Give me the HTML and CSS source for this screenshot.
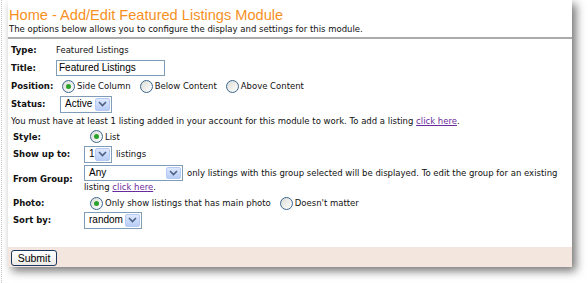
FILE: index.html
```html
<!DOCTYPE html>
<html lang="en">
<head>
    <meta charset="UTF-8">
    <title>Add/Edit Featured Listings Module</title>
    <link rel="stylesheet" href="styles.css">
</head>
<body>
    <div class="page">
        <div class="panel">
            <div class="head">
                <h1>Home - Add/Edit Featured Listings Module</h1>
                <p class="intro">The options below allows you to configure the display and settings for this module.</p>
            </div>

            <div class="form-top">
                <span class="lbl">Type:</span>
                <span class="val">Featured Listings</span>

                <span class="lbl">Title:</span>
                <span class="val"><span class="textbox">Featured Listings</span></span>

                <span class="lbl">Position:</span>
                <span class="val radios">
                    <span class="radio checked"></span><span class="opt">Side Column</span>
                    <span class="radio"></span><span class="opt">Below Content</span>
                    <span class="radio"></span><span class="opt">Above Content</span>
                </span>

                <span class="lbl">Status:</span>
                <span class="val"><span class="select status-sel"><span class="sel-text">Active</span><span class="arrow"><svg width="9" height="6" viewBox="0 0 9 6"><path d="M1 1 L4.5 4.5 L8 1" fill="none" stroke="#4d6185" stroke-width="1.6"/></svg></span></span></span>
            </div>

            <p class="notice">You must have at least 1 listing added in your account for this module to work. To add a listing <a href="#">click here</a>.</p>

            <div class="form-sub">
                <span class="lbl">Style:</span>
                <span class="val radios"><span class="radio checked"></span><span class="opt">List</span></span>

                <span class="lbl">Show up to:</span>
                <span class="val"><span class="select count-sel"><span class="sel-text">1</span><span class="arrow"><svg width="9" height="6" viewBox="0 0 9 6"><path d="M1 1 L4.5 4.5 L8 1" fill="none" stroke="#4d6185" stroke-width="1.6"/></svg></span></span> <span class="after">listings</span></span>

                <span class="lbl">From Group:</span>
                <div class="group-val">
                    <div class="group-line">
                        <span class="select group-sel"><span class="sel-text">Any</span><span class="arrow"><svg width="9" height="6" viewBox="0 0 9 6"><path d="M1 1 L4.5 4.5 L8 1" fill="none" stroke="#4d6185" stroke-width="1.6"/></svg></span></span>
                        <span>only listings with this group selected will be displayed. To edit the group for an existing</span>
                    </div>
                    <div class="group-line2"><span>listing</span> <a href="#">click here</a><span>.</span></div>
                </div>

                <span class="lbl">Photo:</span>
                <span class="val radios">
                    <span class="radio checked"></span><span class="opt">Only show listings that has main photo</span>
                    <span class="radio"></span><span class="opt">Doesn't matter</span>
                </span>

                <span class="lbl">Sort by:</span>
                <span class="val"><span class="select sort-sel"><span class="sel-text">random</span><span class="arrow"><svg width="9" height="6" viewBox="0 0 9 6"><path d="M1 1 L4.5 4.5 L8 1" fill="none" stroke="#4d6185" stroke-width="1.6"/></svg></span></span></span>
            </div>

            <div class="foot">
                <button type="button">Submit</button>
            </div>
        </div>
    </div>
</body>
</html>
```

FILE: styles.css
```css
html, body {
    margin: 0;
    padding: 0;
    background: #ffffff;
}
body {
    font-family: 'DejaVu Sans', Verdana, sans-serif;
    font-size: 8.5px;
    color: #111111;
}
.page {
    width: 588px;
    height: 283px;
    overflow: hidden;
    border-left: 1px dotted #c4c4c4;
    margin-left: 1px;
    box-sizing: border-box;
    padding-left: 6px;
}
.panel {
    width: 564px;
    height: 267px;
    background: #ffffff;
    box-shadow: 4px 4px 9px rgba(0, 0, 0, 0.55);
    display: flex;
    flex-direction: column;
}
/* Heading */
.head {
    border-bottom: 2px solid #ababab;
    height: 39px;
    box-sizing: border-box;
    padding: 7px 0 0 1px;
}
h1 {
    margin: 0;
    font-family: 'Liberation Sans', Arial, sans-serif;
    font-size: 14.6px;
    font-weight: normal;
    line-height: 17px;
    color: #f7901e;
}
.intro {
    margin: 0;
    line-height: 11px;
}
/* Form rows */
.form-top, .form-sub {
    display: grid;
    align-items: center;
}
.form-top {
    grid-template-columns: 45px 1fr;
    grid-template-rows: 16px 19px 18px 18px;
    padding: 3px 0 0 3px;
}
.form-sub {
    grid-template-columns: 71px 1fr;
    grid-template-rows: 15px 20px 30px 18px 16px;
    padding-left: 5px;
}
.lbl {
    font-weight: bold;
}
.val {
    display: flex;
    align-items: center;
}
.textbox {
    width: 109px;
    height: 16px;
    box-sizing: border-box;
    border: 1px solid #7f9db9;
    font-family: 'Liberation Sans', Arial, sans-serif;
    font-size: 10px;
    line-height: 14px;
    padding-left: 2px;
    color: #000000;
}
.radios .radio {
    margin: 0 2px 0 5px;
}
.radios .radio:first-child {
    margin-left: 6px;
}
.radio {
    width: 11px;
    height: 11px;
    border: 1px solid #3a6690;
    border-radius: 50%;
    background: linear-gradient(135deg, #dcdcd6, #ffffff);
    display: inline-flex;
    align-items: center;
    justify-content: center;
    flex: none;
}
.radio.checked::after {
    content: "";
    width: 5px;
    height: 5px;
    border-radius: 50%;
    background: #2aa12a;
}
.opt {
    margin-right: 4px;
}
/* Fake XP style dropdowns */
.select {
    display: inline-flex;
    align-items: center;
    justify-content: space-between;
    height: 17px;
    box-sizing: border-box;
    border: 1px solid #7f9db9;
    background: #ffffff;
    padding: 1px;
    font-family: 'Liberation Sans', Arial, sans-serif;
    font-size: 10px;
    line-height: 12px;
    color: #000000;
    flex: none;
}
.sel-text {
    padding-left: 3px;
}
.arrow {
    width: 15px;
    height: 13px;
    background: linear-gradient(#dde8fd, #b8cdf6);
    border: 1px solid #b5c9f2;
    box-sizing: border-box;
    border-radius: 2px;
    display: flex;
    align-items: center;
    justify-content: center;
}
.status-sel {
    width: 52px;
    margin-left: 4px;
}
.count-sel {
    width: 28px;
}
.group-sel {
    width: 99px;
    height: 16px;
    margin-right: 4px;
}
.group-sel .arrow {
    height: 12px;
}
.sort-sel {
    width: 58px;
}
.after {
    margin-left: 4px;
}
.group-val {
    padding-top: 1px;
}
.group-line {
    display: flex;
    align-items: center;
    white-space: nowrap;
}
.group-line2 {
    line-height: 13px;
}
.notice {
    margin: 0;
    padding-left: 3px;
    line-height: 16px;
}
a {
    color: #6a2c9c;
}
/* Footer */
.foot {
    margin-top: auto;
    background: #f2e6df;
    height: 20px;
    padding: 3px 0 0 3px;
    box-sizing: border-box;
}
button {
    width: 46px;
    height: 16px;
    padding: 0;
    border: 1px solid #1d3760;
    border-radius: 3px;
    background: linear-gradient(#ffffff, #ecebe6);
    font-family: 'Liberation Sans', Arial, sans-serif;
    font-size: 10.5px;
    line-height: 14px;
    color: #000000;
}
```
